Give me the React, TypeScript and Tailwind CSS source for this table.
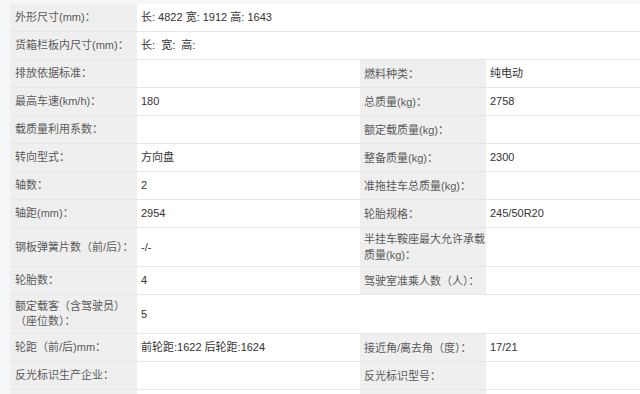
import React from "react";

type Row = {
    label: React.ReactNode;
    value?: React.ReactNode;
    label2?: React.ReactNode;
    value2?: React.ReactNode;
    wide?: boolean;
    tall?: boolean;
};

const rows: Row[] = [
    { label: "外形尺寸(mm)：", value: "长: 4822 宽: 1912 高: 1643", wide: true },
    { label: "货箱栏板内尺寸(mm)：", value: "长:  宽:  高:", wide: true },
    { label: "排放依据标准：", value: "", label2: "燃料种类：", value2: "纯电动" },
    { label: "最高车速(km/h)：", value: "180", label2: "总质量(kg)：", value2: "2758" },
    { label: "载质量利用系数：", value: "", label2: "额定载质量(kg)：", value2: "" },
    { label: "转向型式：", value: "方向盘", label2: "整备质量(kg)：", value2: "2300" },
    { label: "轴数：", value: "2", label2: "准拖挂车总质量(kg)：", value2: "" },
    { label: "轴距(mm)：", value: "2954", label2: "轮胎规格：", value2: "245/50R20" },
    {
        label: "钢板弹簧片数（前/后）：",
        value: "-/-",
        label2: (
            <>
                半挂车鞍座最大允许承载
                <br />
                质量(kg)：
            </>
        ),
        value2: "",
        tall: true,
    },
    { label: "轮胎数：", value: "4", label2: "驾驶室准乘人数（人）：", value2: "" },
    {
        label: (
            <>
                额定载客（含驾驶员）
                <br />
                （座位数）：
            </>
        ),
        value: "5",
        wide: true,
        tall: true,
    },
    { label: "轮距（前/后)mm：", value: "前轮距:1622 后轮距:1624", label2: "接近角/离去角（度）：", value2: "17/21" },
    { label: "反光标识生产企业：", value: "", label2: "反光标识型号：", value2: "" },
    { label: "", value: "", label2: "", value2: "" },
];

export default function App() {
    return (
        <div
            className="w-[640px] h-[394px] overflow-hidden bg-[#f5f6f8] pt-[4px] pl-[10px] text-[11px] leading-[15px]"
            style={{ fontFamily: '"Liberation Sans", "Noto Sans CJK SC", sans-serif' }}
        >
            <div className="w-[630px] bg-white">
                {rows.map((r, i) => (
                    <div
                        key={i}
                        className={`grid grid-cols-[127px_223px_126px_154px] border-b border-[#e6e6e6] ${r.tall ? "h-[39px]" : "h-[28px]"}`}
                    >
                        <div className="bg-[#efefef] flex items-center pl-[5px] text-[#5a5a5a] whitespace-nowrap">
                            <span>{r.label}</span>
                        </div>
                        {r.wide ? (
                            <div className="col-span-3 flex items-center pl-[4px] text-[#333] whitespace-pre">{r.value}</div>
                        ) : (
                            <>
                                <div className="flex items-center pl-[4px] text-[#333]">{r.value}</div>
                                <div className="bg-[#efefef] flex items-center pl-[4px] text-[#5a5a5a] whitespace-nowrap leading-[16px]">
                                    <span>{r.label2}</span>
                                </div>
                                <div className="flex items-center pl-[4px] text-[#333]">{r.value2}</div>
                            </>
                        )}
                    </div>
                ))}
            </div>
        </div>
    );
}
